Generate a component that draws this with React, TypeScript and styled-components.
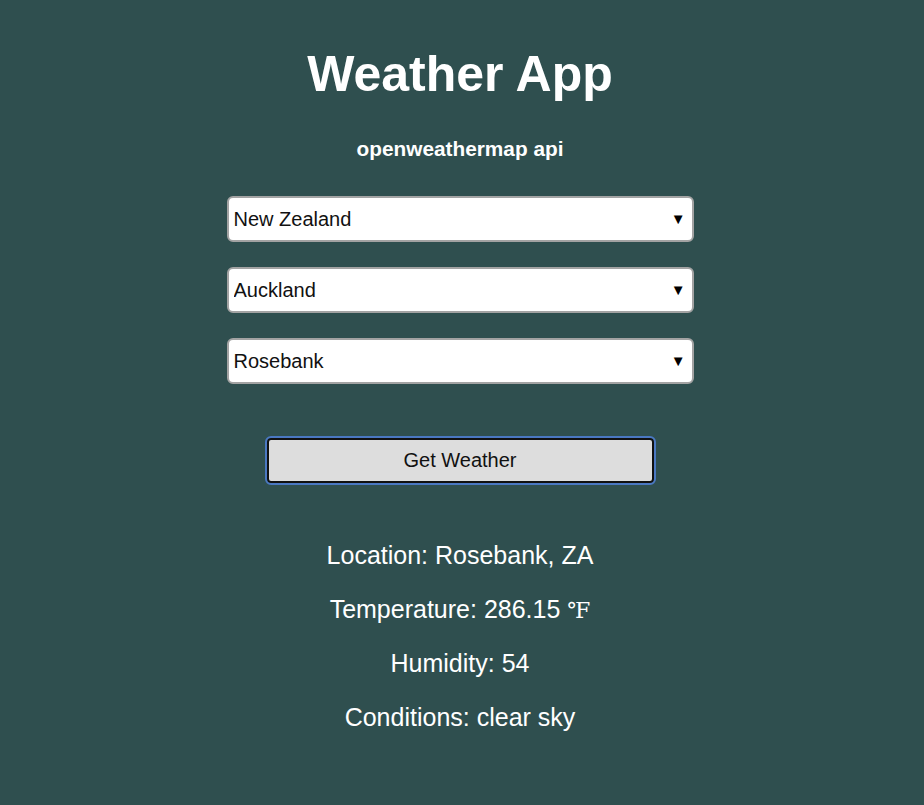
import React from "react";
import styled, { createGlobalStyle } from "styled-components";

const Global = createGlobalStyle`
  html, body { margin: 0; padding: 0; background: #2f4f4f; }
  body { font-family: "Liberation Sans", Arial, sans-serif; }
`;

const Page = styled.main`
  min-height: 805px;
  box-sizing: border-box;
  padding: 44px 4px 0 0;
  display: flex;
  flex-direction: column;
  align-items: center;
  color: #fff;
`;

const Title = styled.h1`
  margin: 0;
  font-size: 50px;
  line-height: 60px;
  font-weight: 700;
`;

const Subtitle = styled.h3`
  margin: 33px 0 0;
  font-size: 20.8px;
  line-height: 24px;
  font-weight: 700;
`;

const Form = styled.div`
  margin-top: 35px;
  display: flex;
  flex-direction: column;
  align-items: center;
  gap: 25px;
`;

const SelectWrap = styled.div`
  position: relative;
  width: 467px;
  height: 46px;
`;

const Select = styled.select`
  appearance: none;
  width: 100%;
  height: 100%;
  box-sizing: border-box;
  border: 2px solid #a3a3a3;
  border-radius: 6px;
  background: #fff;
  color: #111;
  font-family: "Liberation Sans", Arial, sans-serif;
  font-size: 20px;
  padding: 0 30px 0 5px;
  outline: none;
`;

const Arrow = styled.span`
  position: absolute;
  right: 8px;
  top: 50%;
  transform: translateY(-55%);
  font-size: 15px;
  color: #000;
  pointer-events: none;
`;

const Button = styled.button`
  margin-top: 54px;
  width: 387px;
  height: 45px;
  box-sizing: border-box;
  background: #dddddd;
  border: 2px solid #111;
  border-radius: 4px;
  outline: 2px solid #4a78c2;
  outline-offset: 0;
  font-family: "Liberation Sans", Arial, sans-serif;
  font-size: 20px;
  color: #111;
`;

const Results = styled.section`
  margin-top: 57px;
  display: flex;
  flex-direction: column;
  align-items: center;
  gap: 24px;
`;

const Line = styled.p`
  margin: 0;
  font-size: 25px;
  line-height: 30px;
  height: 30px;
`;

const Unit = styled.span`
  font-family: "DejaVu Serif", "Liberation Serif", serif;
  font-size: 22px;
  line-height: 0;
`;

const Dropdown = ({ value }: { value: string }) => (
  <SelectWrap>
    <Select defaultValue={value}>
      <option>{value}</option>
    </Select>
    <Arrow>▼</Arrow>
  </SelectWrap>
);

export default function App() {
  return (
    <>
      <Global />
      <Page>
        <Title>Weather App</Title>
        <Subtitle>openweathermap api</Subtitle>
        <Form>
          <Dropdown value="New Zealand" />
          <Dropdown value="Auckland" />
          <Dropdown value="Rosebank" />
        </Form>
        <Button>Get Weather</Button>
        <Results>
          <Line>Location: Rosebank, ZA</Line>
          <Line>
            Temperature: 286.15 <Unit>℉</Unit>
          </Line>
          <Line>Humidity: 54</Line>
          <Line>Conditions: clear sky</Line>
        </Results>
      </Page>
    </>
  );
}
